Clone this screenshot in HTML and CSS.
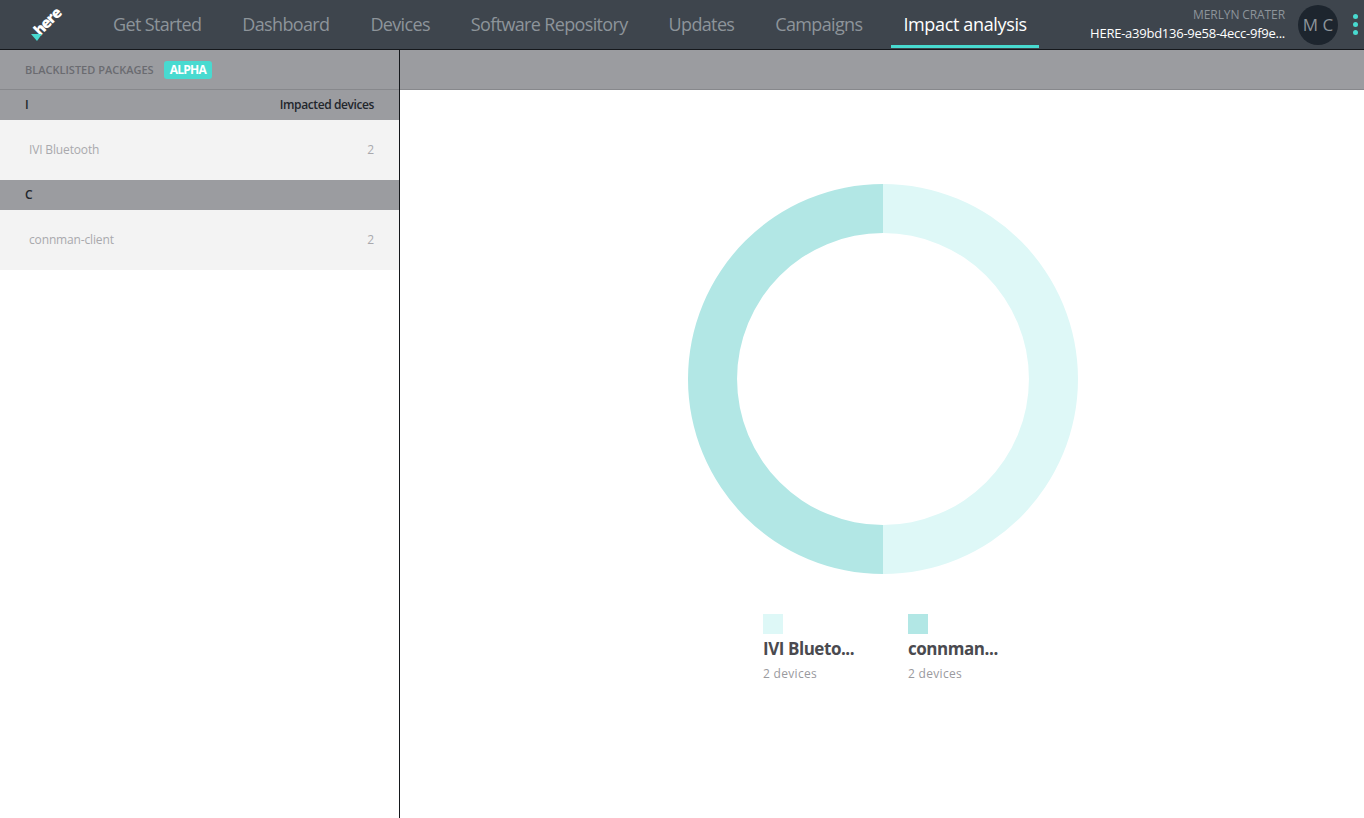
FILE: index.html
```html
<!DOCTYPE html>
<html lang="en">
<head>
    <meta charset="UTF-8">
    <meta name="viewport" content="width=device-width, initial-scale=1.0">
    <title>Impact analysis</title>
    <link rel="stylesheet" href="styles.css">
</head>
<body>

    <nav class="navbar">
        <div class="logo">
            <span class="logo-text">here</span>
            <svg class="logo-mark" width="12" height="8" viewBox="0 0 12 8"><polygon points="0,0 11,0 6,7" fill="#48dad0"/></svg>
        </div>
        <ul class="nav-links">
            <li><a href="#">Get Started</a></li>
            <li><a href="#">Dashboard</a></li>
            <li><a href="#">Devices</a></li>
            <li><a href="#">Software Repository</a></li>
            <li><a href="#">Updates</a></li>
            <li><a href="#">Campaigns</a></li>
            <li><a href="#" class="active">Impact analysis</a></li>
        </ul>
        <div class="account">
            <div class="account-text">
                <div class="account-name">MERLYN CRATER</div>
                <div class="account-id">HERE-a39bd136-9e58-4ecc-9f9e...</div>
            </div>
            <div class="avatar">M C</div>
            <div class="menu-dots"><i></i><i></i><i></i></div>
        </div>
    </nav>

    <div class="content">
        <aside class="sidebar">
            <div class="sidebar-title">
                <span>BLACKLISTED PACKAGES</span>
                <span class="badge">ALPHA</span>
            </div>
            <div class="group-head">
                <span>I</span>
                <span>Impacted devices</span>
            </div>
            <div class="package">
                <span>IVI Bluetooth</span>
                <span>2</span>
            </div>
            <div class="group-head">
                <span>C</span>
            </div>
            <div class="package">
                <span>connman-client</span>
                <span>2</span>
            </div>
        </aside>

        <main class="main">
            <div class="main-head"></div>
            <div class="chart-wrap">
                <svg class="donut" width="390" height="390" viewBox="0 0 390 390">
                    <path d="M195 0 A195 195 0 0 1 195 390 L195 341 A146 146 0 0 0 195 49 Z" fill="#def8f7"/>
                    <path d="M195 0 A195 195 0 0 0 195 390 L195 341 A146 146 0 0 1 195 49 Z" fill="#b2e7e5"/>
                </svg>
                <div class="legend">
                    <div class="legend-item">
                        <div class="swatch swatch-light"></div>
                        <div class="legend-name">IVI Blueto...</div>
                        <div class="legend-count">2 devices</div>
                    </div>
                    <div class="legend-item">
                        <div class="swatch swatch-dark"></div>
                        <div class="legend-name">connman...</div>
                        <div class="legend-count">2 devices</div>
                    </div>
                </div>
            </div>
        </main>
    </div>

</body>
</html>
```

FILE: styles.css
```css
* {
    box-sizing: border-box;
}

html, body {
    height: 100%;
}

body {
    margin: 0;
    font-family: "Open Sans", "Noto Sans", sans-serif;
    background-color: #fff;
    overflow: hidden;
}

.navbar {
    display: flex;
    height: 50px;
    background-color: #3e454d;
    border-bottom: 1px solid #15181c;
}

.logo {
    position: relative;
    width: 101px;
    flex: none;
}

.logo-text {
    position: absolute;
    left: 31px;
    top: 11px;
    font-size: 15px;
    font-weight: 800;
    line-height: 20px;
    letter-spacing: -1px;
    color: #fff;
    transform: rotate(-45deg);
}

.logo-mark {
    position: absolute;
    left: 31px;
    top: 34px;
}

.nav-links {
    display: flex;
    list-style: none;
    margin: 0;
    padding: 0;
    gap: 17px;
}

.nav-links a {
    display: block;
    height: 48px;
    padding: 0 12px;
    font-size: 18px;
    line-height: 49px;
    letter-spacing: -0.65px;
    color: #8d949a;
    text-decoration: none;
}

.nav-links a.active {
    color: #fff;
    letter-spacing: -0.35px;
    border-bottom: 3px solid #48dad0;
}

.account {
    display: flex;
    align-items: center;
    margin-left: auto;
}

.account-text {
    text-align: right;
}

.account-name {
    font-size: 12px;
    line-height: 17px;
    letter-spacing: -0.1px;
    color: #8d949a;
}

.account-id {
    font-size: 13px;
    line-height: 20px;
    letter-spacing: -0.25px;
    color: #fff;
}

.avatar {
    width: 40px;
    height: 40px;
    margin-left: 13px;
    border-radius: 50%;
    background-color: #1d252e;
    color: #8d949a;
    font-size: 17px;
    line-height: 40px;
    text-align: center;
}

.menu-dots {
    display: flex;
    flex-direction: column;
    gap: 3px;
    width: 26px;
    padding-left: 15px;
}

.menu-dots i {
    display: block;
    width: 5px;
    height: 5px;
    border-radius: 50%;
    background-color: #48dad0;
}

.content {
    display: flex;
    height: calc(100% - 50px);
}

.sidebar {
    width: 400px;
    flex: none;
    border-right: 1px solid #15181c;
}

.sidebar-title {
    display: flex;
    align-items: center;
    gap: 10px;
    height: 40px;
    padding-left: 25px;
    background-color: #9b9ca0;
    border-bottom: 1px solid #87888c;
    font-size: 11px;
    font-weight: 600;
    color: #6a6b70;
}

.badge {
    height: 18px;
    padding: 0 6px;
    border-radius: 3px;
    background-color: #48dad0;
    color: #fff;
    font-size: 12px;
    font-weight: 700;
    line-height: 18px;
    letter-spacing: -0.7px;
}

.group-head {
    display: flex;
    justify-content: space-between;
    align-items: center;
    height: 30px;
    padding: 0 25px 2px;
    background-color: #9b9ca0;
    font-size: 12px;
    font-weight: 600;
    letter-spacing: -0.4px;
    color: #22262c;
}

.package {
    display: flex;
    justify-content: space-between;
    align-items: center;
    height: 60px;
    padding: 0 25px 2px 29px;
    background-color: #f3f3f3;
    font-size: 12px;
    letter-spacing: -0.15px;
    color: #a9a9ad;
}

.main {
    flex: 1;
}

.main-head {
    height: 40px;
    background-color: #9b9ca0;
    border-bottom: 1px solid #87888c;
}

.chart-wrap {
    display: flex;
    flex-direction: column;
    align-items: center;
    padding: 94px 0 0 2px;
}

.donut {
    display: block;
}

.legend {
    display: flex;
    width: 240px;
    margin-top: 40px;
}

.legend-item {
    flex: none;
    width: 145px;
}

.swatch {
    width: 20px;
    height: 20px;
}

.swatch-light {
    background-color: #def8f7;
}

.swatch-dark {
    background-color: #b2e7e5;
}

.legend-name {
    margin-top: 3px;
    font-size: 17px;
    font-weight: 700;
    line-height: 24px;
    letter-spacing: -0.45px;
    color: #4a4a4f;
}

.legend-count {
    margin-top: 3px;
    font-size: 12px;
    line-height: 20px;
    letter-spacing: 0.3px;
    color: #9a9a9e;
}
```
